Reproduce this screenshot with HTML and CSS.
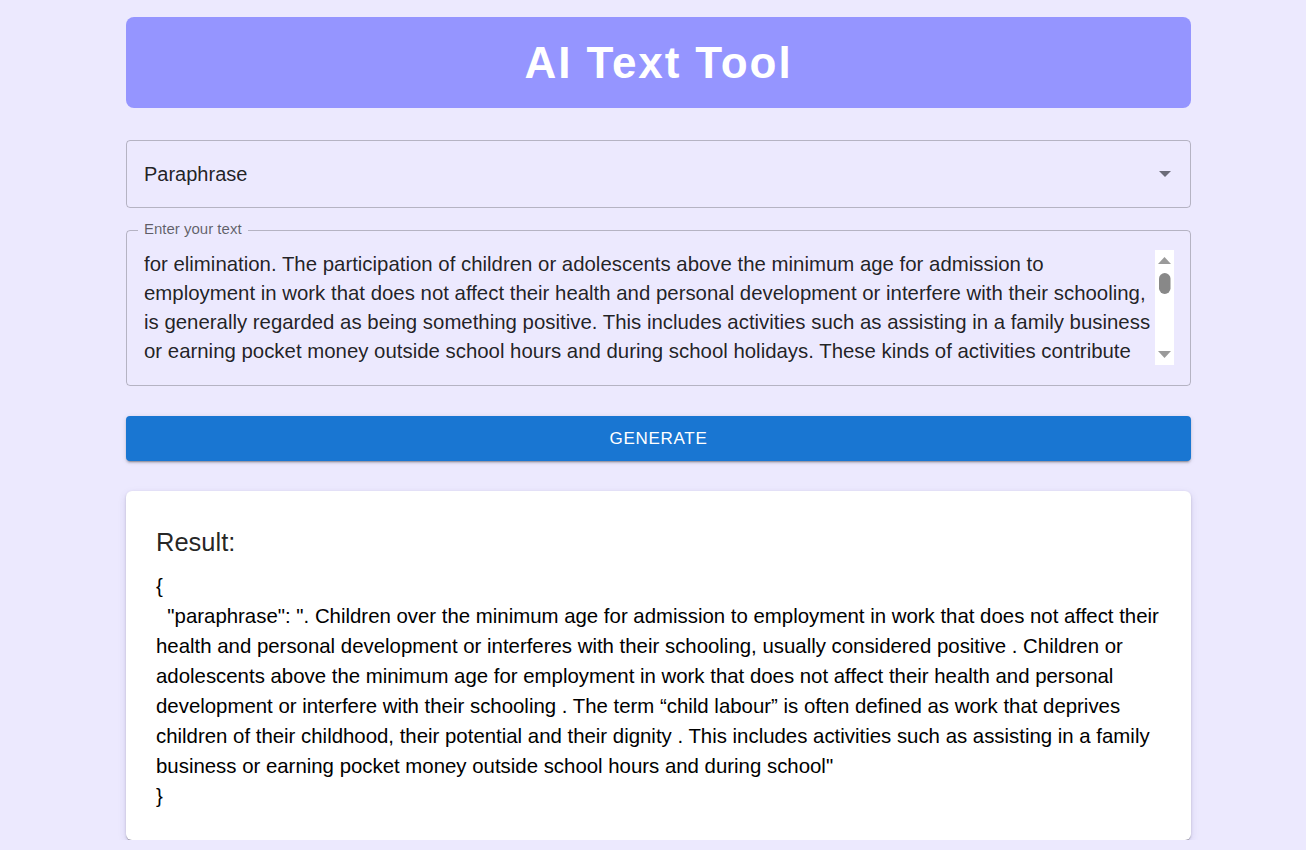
FILE: index.html
```html
<!DOCTYPE html>
<html lang="en">
<head>
<meta charset="utf-8">
<title>AI Text Tool</title>
<link rel="stylesheet" href="styles.css">
</head>
<body>
<main class="container">
  <header class="hero">
    <h1 class="hero-title">AI Text Tool</h1>
  </header>

  <div class="select">
    <span class="select-value">Paraphrase</span>
    <svg class="select-arrow" width="12" height="6" viewBox="0 0 12 6"><path d="M0 0h12L6 6z" fill="#6b6b78"/></svg>
  </div>

  <fieldset class="textfield">
    <legend class="textfield-label">Enter your text</legend>
    <div class="textfield-body">
      <div class="textfield-text">
        <span class="line">for elimination. The participation of children or adolescents above the minimum age for admission to</span>
        <span class="line">employment in work that does not affect their health and personal development or interfere with their schooling,</span>
        <span class="line">is generally regarded as being something positive. This includes activities such as assisting in a family business</span>
        <span class="line">or earning pocket money outside school hours and during school holidays. These kinds of activities contribute</span>
      </div>
      <div class="fake-scroll">
        <svg width="19" height="115" viewBox="0 0 19 115">
          <rect width="19" height="115" fill="#ffffff"/>
          <path d="M3 14h13L9.5 7z" fill="#9a9a9a"/>
          <rect x="4" y="23" width="11.5" height="21" rx="5.75" fill="#888888"/>
          <path d="M3 101h13L9.5 108z" fill="#9a9a9a"/>
        </svg>
      </div>
    </div>
  </fieldset>

  <button class="btn" type="button">GENERATE</button>

  <section class="card">
    <h2 class="card-title">Result:</h2>
    <pre class="result">{
  "paraphrase": ". Children over the minimum age for admission to employment in work that does not affect their health and personal development or interferes with their schooling, usually considered positive . Children or adolescents above the minimum age for employment in work that does not affect their health and personal development or interfere with their schooling . The term “child labour” is often defined as work that deprives children of their childhood, their potential and their dignity . This includes activities such as assisting in a family business or earning pocket money outside school hours and during school"
}</pre>
  </section>
</main>
</body>
</html>
```

FILE: styles.css
```css
* { box-sizing: border-box; }

html, body {
  margin: 0;
  padding: 0;
  background: #ece9fe;
  font-family: "Liberation Sans", Arial, sans-serif;
  color: rgba(0, 0, 0, 0.87);
}

.container {
  width: 1065px;
  margin-left: 126px;
  padding-top: 17px;
  display: flex;
  flex-direction: column;
}

.hero {
  height: 91px;
  background: #9595ff;
  border-radius: 8px;
  display: flex;
  align-items: center;
  justify-content: center;
}

.hero-title {
  margin: 0;
  color: #ffffff;
  font-size: 44px;
  font-weight: 700;
  letter-spacing: 1.9px;
}

.select {
  margin-top: 32px;
  height: 68px;
  border: 1px solid rgba(0, 0, 0, 0.23);
  border-radius: 4px;
  display: flex;
  align-items: center;
  justify-content: space-between;
  padding: 0 19px 0 17px;
}

.select-value {
  font-size: 20px;
}

.textfield {
  margin: 22px 0 0;
  padding: 0 16px 0 17px;
  height: 163px;
  border: 1px solid rgba(0, 0, 0, 0.23);
  border-radius: 4px;
  position: relative;
  top: -7px;
  margin-bottom: -7px;
  min-width: 0;
}

.textfield-label {
  font-size: 15px;
  color: rgba(0, 0, 0, 0.6);
  padding: 0 6px;
  margin-left: -6px;
  line-height: 15px;
  transform: translateY(-2px);
}

.textfield-body {
  display: flex;
  justify-content: space-between;
  margin-top: 12px;
}

.textfield-text {
  font-size: 20.4px;
  line-height: 29px;
  height: 116px;
  overflow: hidden;
}

.line {
  display: block;
  white-space: nowrap;
}

.fake-scroll {
  width: 19px;
  height: 115px;
  flex: none;
}

.fake-scroll svg { display: block; }

.btn {
  margin-top: 30px;
  height: 45px;
  border: 0;
  border-radius: 4px;
  background: #1976d2;
  color: #ffffff;
  font-family: "Liberation Sans", Arial, sans-serif;
  font-size: 17px;
  letter-spacing: 0.7px;
  box-shadow: 0 3px 1px -2px rgba(0,0,0,0.2), 0 2px 2px 0 rgba(0,0,0,0.14), 0 1px 5px 0 rgba(0,0,0,0.12);
}

.card {
  margin-top: 30px;
  background: #ffffff;
  border-radius: 6px;
  padding: 35px 25px 29px 30px;
  box-shadow: 0 2px 1px -1px rgba(0,0,0,0.2), 0 1px 1px 0 rgba(0,0,0,0.14), 0 1px 3px 0 rgba(0,0,0,0.12), 0 3px 8px rgba(60,40,140,0.12);
}

.card-title {
  margin: 0 0 13px;
  font-size: 25.5px;
  font-weight: 400;
  line-height: 32px;
}

.result {
  margin: 0;
  font-family: "Liberation Sans", Arial, sans-serif;
  font-size: 20.4px;
  line-height: 30px;
  white-space: pre-wrap;
  color: #000;
}
```
